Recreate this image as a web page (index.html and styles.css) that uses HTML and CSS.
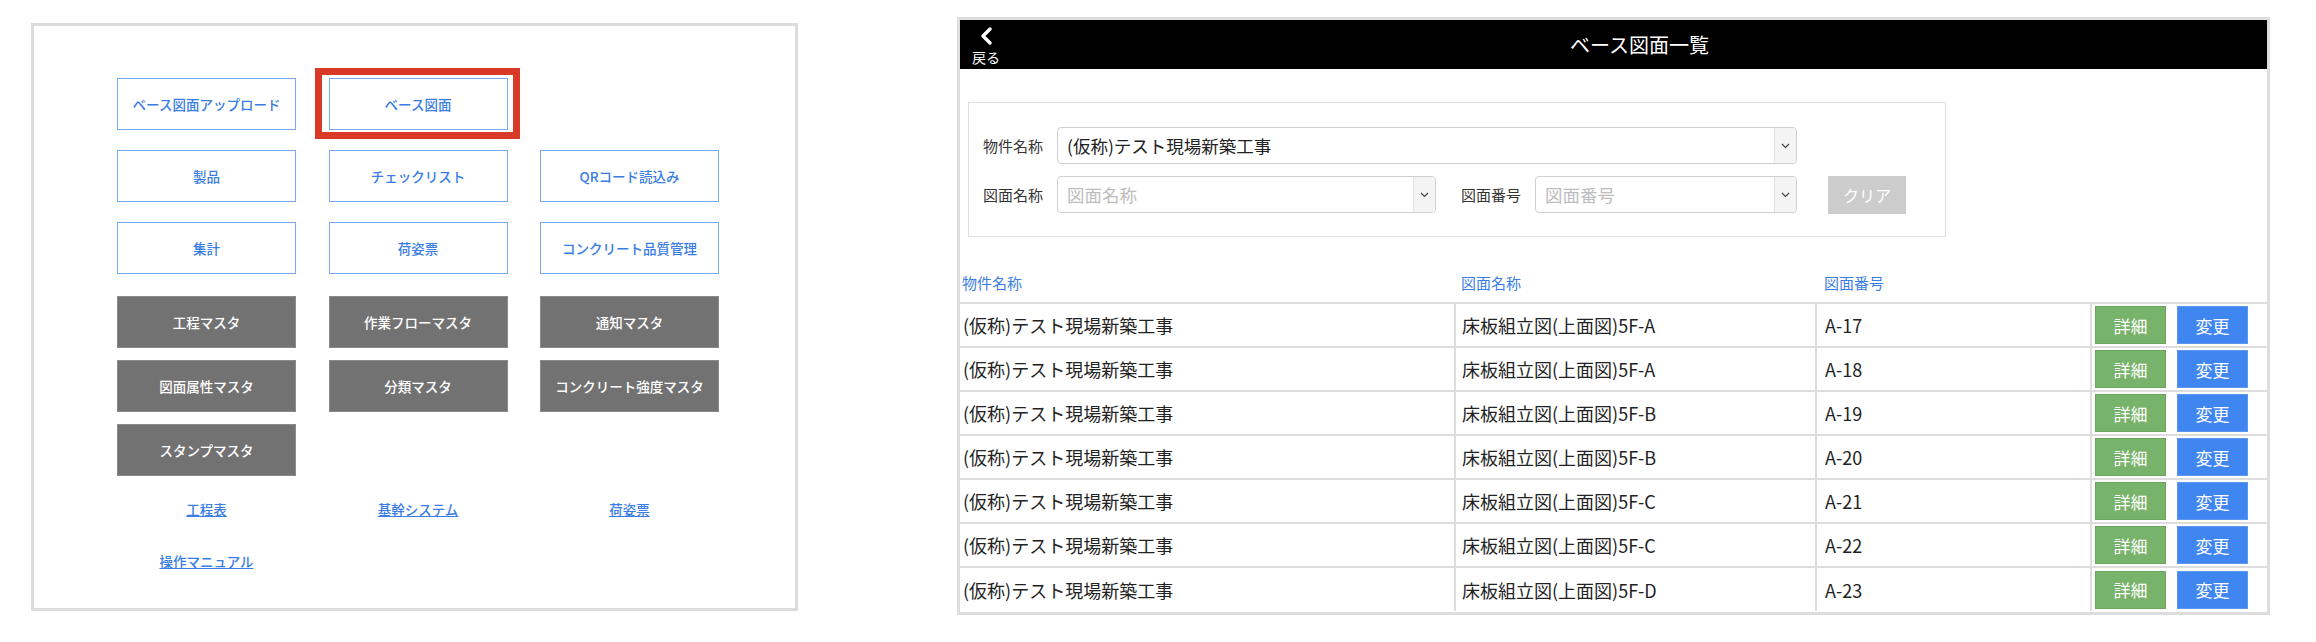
FILE: index.html
```html
<!DOCTYPE html>
<html lang="ja">
<head>
<meta charset="utf-8">
<title>ベース図面一覧</title>
<link rel="stylesheet" href="styles.css">
</head>
<body>
<div class="page">
  <section class="menu-panel">
    <div class="menu-grid menu-grid-outline">
      <a class="mbtn mbtn-outline">ベース図面アップロード</a>
      <a class="mbtn mbtn-outline mbtn-marked">ベース図面<span class="mark"></span></a>
      <span class="mbtn-empty"></span>
      <a class="mbtn mbtn-outline">製品</a>
      <a class="mbtn mbtn-outline">チェックリスト</a>
      <a class="mbtn mbtn-outline">QRコード読込み</a>
      <a class="mbtn mbtn-outline">集計</a>
      <a class="mbtn mbtn-outline">荷姿票</a>
      <a class="mbtn mbtn-outline">コンクリート品質管理</a>
    </div>
    <div class="menu-grid menu-grid-gray">
      <a class="mbtn mbtn-gray">工程マスタ</a>
      <a class="mbtn mbtn-gray">作業フローマスタ</a>
      <a class="mbtn mbtn-gray">通知マスタ</a>
      <a class="mbtn mbtn-gray">図面属性マスタ</a>
      <a class="mbtn mbtn-gray">分類マスタ</a>
      <a class="mbtn mbtn-gray">コンクリート強度マスタ</a>
      <a class="mbtn mbtn-gray">スタンプマスタ</a>
    </div>
    <div class="link-grid">
      <a class="mlink" href="#">工程表</a>
      <a class="mlink" href="#">基幹システム</a>
      <a class="mlink" href="#">荷姿票</a>
      <a class="mlink" href="#">操作マニュアル</a>
    </div>
  </section>

  <section class="list-panel">
    <header class="topbar">
      <a class="back">
        <svg class="back-icon" width="14" height="18" viewBox="0 0 14 18"><path d="M11 2 L4 9 L11 16" fill="none" stroke="#fff" stroke-width="3.4" stroke-linecap="round" stroke-linejoin="round"/></svg>
        <span class="back-label">戻る</span>
      </a>
      <h1 class="title">ベース図面一覧</h1>
    </header>

    <div class="filter">
      <div class="frow">
        <label class="flabel">物件名称</label>
        <div class="select select-wide">
          <span class="select-value">(仮称)テスト現場新築工事</span>
          <span class="select-arrow"><svg width="9" height="6" viewBox="0 0 9 6"><path d="M1 1 L4.5 4.5 L8 1" fill="none" stroke="#444" stroke-width="1.2"/></svg></span>
        </div>
      </div>
      <div class="frow frow-second">
        <label class="flabel">図面名称</label>
        <div class="select select-name">
          <span class="select-value placeholder">図面名称</span>
          <span class="select-arrow"><svg width="9" height="6" viewBox="0 0 9 6"><path d="M1 1 L4.5 4.5 L8 1" fill="none" stroke="#444" stroke-width="1.2"/></svg></span>
        </div>
        <label class="flabel flabel-gap">図面番号</label>
        <div class="select select-number">
          <span class="select-value placeholder">図面番号</span>
          <span class="select-arrow"><svg width="9" height="6" viewBox="0 0 9 6"><path d="M1 1 L4.5 4.5 L8 1" fill="none" stroke="#444" stroke-width="1.2"/></svg></span>
        </div>
        <button class="clear">クリア</button>
      </div>
    </div>

    <table class="list">
      <colgroup>
        <col class="c1"><col class="c2"><col class="c3"><col class="c4">
      </colgroup>
      <thead>
        <tr><th>物件名称</th><th>図面名称</th><th>図面番号</th><th></th></tr>
      </thead>
      <tbody>
        <tr><td>(仮称)テスト現場新築工事</td><td>床板組立図(上面図)5F-A</td><td>A-17</td><td class="acts"><span class="act act-detail">詳細</span><span class="act act-edit">変更</span></td></tr>
        <tr><td>(仮称)テスト現場新築工事</td><td>床板組立図(上面図)5F-A</td><td>A-18</td><td class="acts"><span class="act act-detail">詳細</span><span class="act act-edit">変更</span></td></tr>
        <tr><td>(仮称)テスト現場新築工事</td><td>床板組立図(上面図)5F-B</td><td>A-19</td><td class="acts"><span class="act act-detail">詳細</span><span class="act act-edit">変更</span></td></tr>
        <tr><td>(仮称)テスト現場新築工事</td><td>床板組立図(上面図)5F-B</td><td>A-20</td><td class="acts"><span class="act act-detail">詳細</span><span class="act act-edit">変更</span></td></tr>
        <tr><td>(仮称)テスト現場新築工事</td><td>床板組立図(上面図)5F-C</td><td>A-21</td><td class="acts"><span class="act act-detail">詳細</span><span class="act act-edit">変更</span></td></tr>
        <tr><td>(仮称)テスト現場新築工事</td><td>床板組立図(上面図)5F-C</td><td>A-22</td><td class="acts"><span class="act act-detail">詳細</span><span class="act act-edit">変更</span></td></tr>
        <tr><td>(仮称)テスト現場新築工事</td><td>床板組立図(上面図)5F-D</td><td>A-23</td><td class="acts"><span class="act act-detail">詳細</span><span class="act act-edit">変更</span></td></tr>
      </tbody>
    </table>
  </section>
</div>
</body>
</html>
```

FILE: styles.css
```css
* { box-sizing: border-box; }

html, body {
  margin: 0;
  padding: 0;
  background: #fff;
  font-family: "Noto Sans CJK JP", "Noto Sans", sans-serif;
  color: #222;
}

.page {
  display: flex;
  align-items: flex-start;
  width: 2316px;
  height: 642px;
}

/* ---------- left menu panel ---------- */
.menu-panel {
  margin-left: 31px;
  margin-top: 23px;
  width: 767px;
  height: 588px;
  border: 3px solid #dcdcdc;
  padding: 52px 0 0 83px;
}

.menu-grid {
  display: grid;
  grid-template-columns: repeat(3, 179px);
  column-gap: 32.5px;
  grid-auto-rows: 52px;
}

.menu-grid-outline { row-gap: 20px; }
.menu-grid-gray { row-gap: 12px; margin-top: 22px; }

.mbtn {
  position: relative;
  display: flex;
  align-items: center;
  justify-content: center;
  font-size: 13.5px;
  font-weight: 500;
  text-decoration: none;
  cursor: pointer;
}

.mbtn-outline {
  border: 1.5px solid #7aa9f3;
  color: #3a7de3;
  background: #fff;
}

.mbtn-gray {
  background: #727272;
  border: 1px solid #8a8a8a;
  color: #fff;
}

.mark {
  position: absolute;
  left: -15px;
  top: -11px;
  right: -13px;
  bottom: -10px;
  border: 7px solid #d93a28;
  pointer-events: none;
}

.link-grid {
  display: grid;
  grid-template-columns: repeat(3, 179px);
  column-gap: 32.5px;
  grid-auto-rows: 20px;
  row-gap: 32px;
  margin-top: 23px;
  justify-items: center;
}

.mlink {
  font-size: 13.5px;
  font-weight: 500;
  line-height: 20px;
  color: #3a7de3;
  text-decoration: underline;
}

/* ---------- right list panel ---------- */
.list-panel {
  margin-left: 159px;
  margin-top: 17px;
  width: 1313px;
  height: 598px;
  border: 3px solid #dddddd;
}

.topbar {
  display: flex;
  align-items: center;
  height: 49px;
  background: #000;
  color: #fff;
}

.back {
  align-self: flex-start;
  width: 52px;
  display: flex;
  flex-direction: column;
  align-items: center;
  padding-top: 7px;
  color: #fff;
}

.back-icon { display: block; }

.back-label {
  font-size: 14px;
  line-height: 18px;
  margin-top: 3px;
}

.title {
  flex: 1;
  margin: 0;
  text-align: center;
  font-size: 20px;
  font-weight: normal;
}

.filter {
  margin: 33px 0 0 8px;
  width: 978px;
  height: 135px;
  border: 1px solid #e0e0e0;
  padding: 24px 0 0 14px;
}

.frow {
  display: flex;
  align-items: center;
  height: 37px;
}

.frow-second { margin-top: 12px; }

.flabel {
  width: 74px;
  font-size: 15px;
  color: #333;
  flex: none;
}

.flabel-gap { margin-left: 25px; }

.select {
  display: flex;
  height: 37px;
  border: 1px solid #cfcfcf;
  border-radius: 4px;
  overflow: hidden;
  flex: none;
}

.select-wide { width: 740px; }
.select-name { width: 379px; }
.select-number { width: 262px; }

.select-value {
  flex: 1;
  padding-left: 9px;
  font-size: 17.5px;
  line-height: 35px;
  color: #222;
  white-space: nowrap;
}

.placeholder { color: #bdbdbd; }

.select-arrow {
  width: 22px;
  background: #f4f4f4;
  border-left: 1px solid #e2e2e2;
  display: flex;
  align-items: center;
  justify-content: center;
}

.clear {
  margin-left: 31px;
  width: 78px;
  height: 38px;
  border: none;
  background: #cccccc;
  color: #fff;
  font-family: inherit;
  font-size: 16px;
  padding: 0;
}

/* ---------- table ---------- */
.list {
  margin-top: 25px;
  width: 1307px;
  border-collapse: collapse;
  table-layout: fixed;
}

.c1 { width: 495px; }
.c2 { width: 361px; }
.c3 { width: 275px; }
.c4 { width: 176px; }

.list th {
  height: 41px;
  text-align: left;
  font-weight: normal;
  font-size: 15px;
  color: #3a7de3;
  padding: 0 0 0 6px;
  border-bottom: 2px solid #dddddd;
}

.list th:first-child { padding-left: 2px; }

.list td {
  height: 44px;
  font-size: 18px;
  padding: 0 0 0 6px;
  border: 2px solid #dddddd;
  white-space: nowrap;
}

.list td:first-child { padding-left: 3px; }
.list th:nth-child(3), .list td:nth-child(3) { padding-left: 8px; }

.list tr td:first-child { border-left: none; }
.list tr td:last-child { border-right: none; }
.list tbody tr:last-child td { border-bottom: none; }

.list td.acts {
  padding: 0 0 0 3px;
}

.act {
  display: inline-flex;
  align-items: center;
  justify-content: center;
  width: 71px;
  height: 38px;
  vertical-align: middle;
  font-size: 17px;
  color: #fff;
}

.act-detail { background: #77b36a; border: 1px solid #6aa65e; }
.act-edit { background: #3f86f1; border: 1px solid #5b96ef; margin-left: 11px; }
```
